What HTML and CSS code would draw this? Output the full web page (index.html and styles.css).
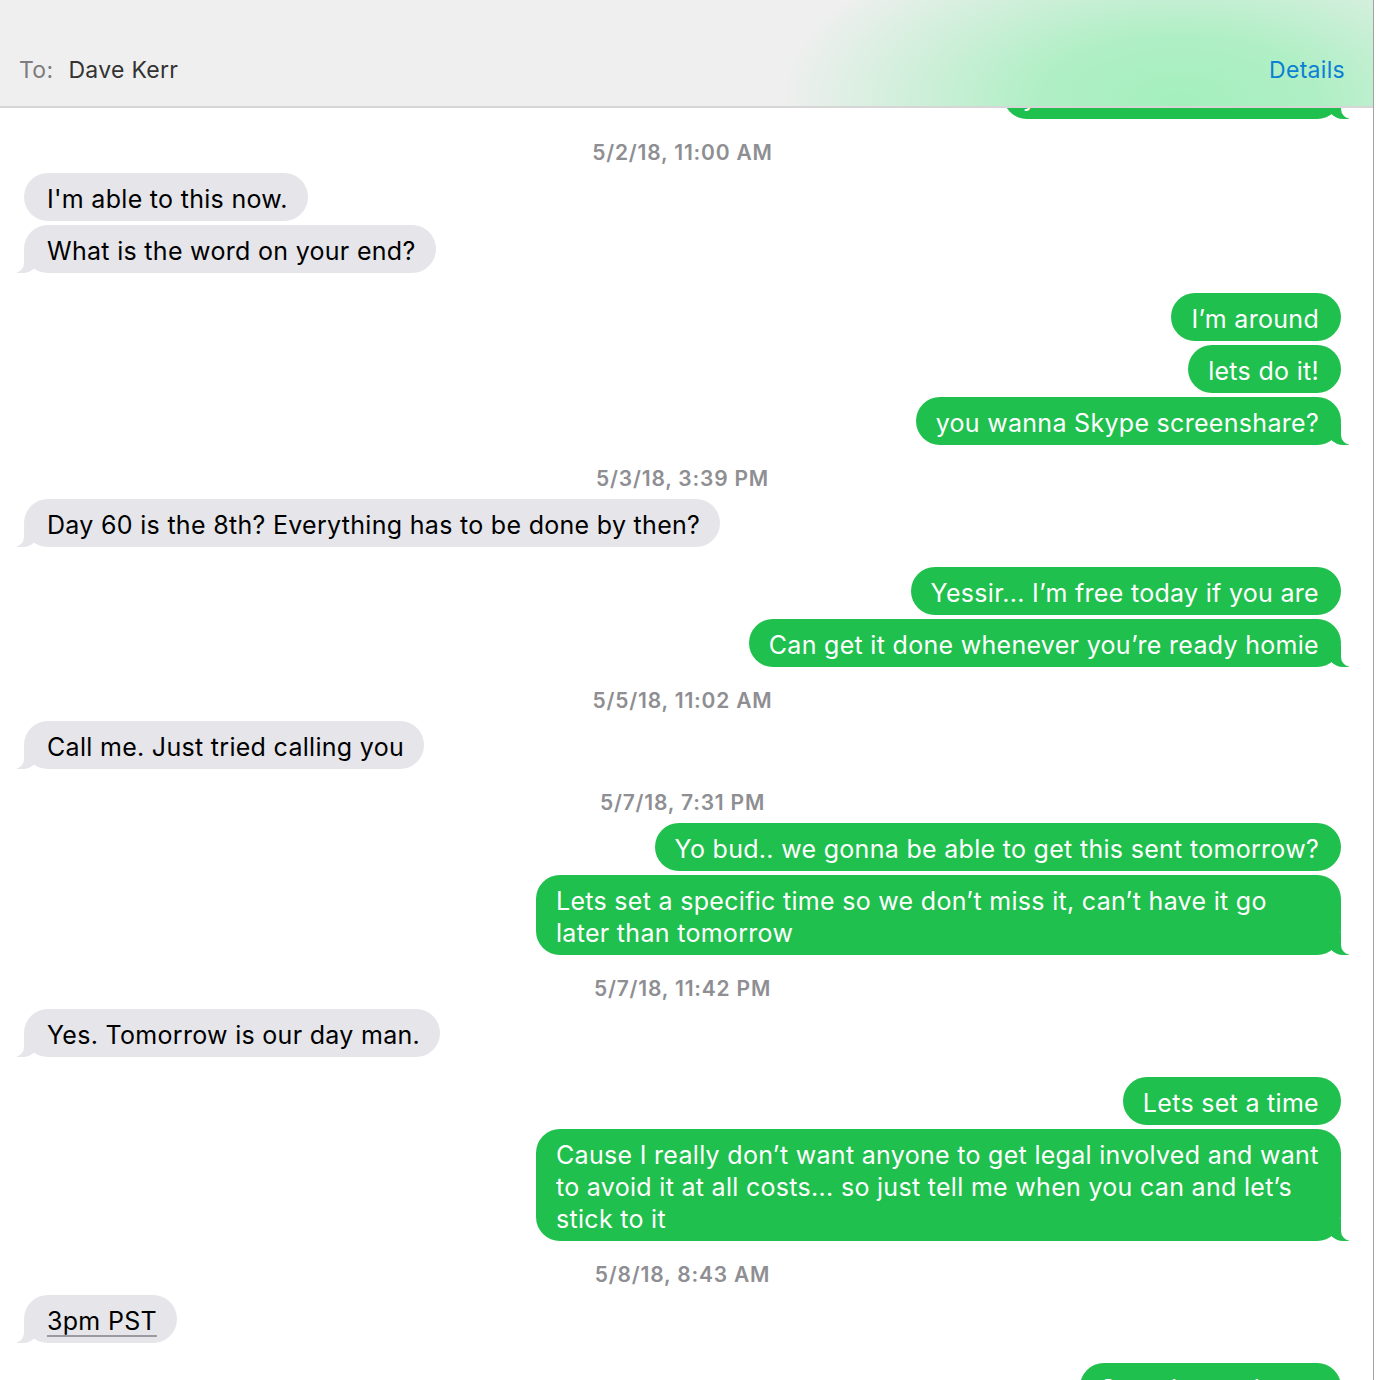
FILE: index.html
```html
<!DOCTYPE html>
<html lang="en">
<head>
    <meta charset="UTF-8">
    <meta name="viewport" content="width=device-width, initial-scale=1.0">
    <title>Messages - Dave Kerr</title>
    <link rel="stylesheet" href="styles.css">
</head>
<body>
    <div class="window">
        <div class="header">
            <span class="to-label">To:</span>
            <span class="to-name">Dave Kerr</span>
            <span class="details">Details</span>
        </div>

        <div class="thread">
            <div class="group me peek">
                <div class="bubble tail">you free later this week?</div>
            </div>

            <div class="stamp">5/2/18, 11:00 AM</div>
            <div class="group them">
                <div class="bubble">I'm able to this now.</div>
                <div class="bubble tail">What is the word on your end?</div>
            </div>
            <div class="group me">
                <div class="bubble">I’m around</div>
                <div class="bubble">lets do it!</div>
                <div class="bubble tail">you wanna Skype screenshare?</div>
            </div>

            <div class="stamp">5/3/18, 3:39 PM</div>
            <div class="group them">
                <div class="bubble tail">Day 60 is the 8th? Everything has to be done by then?</div>
            </div>
            <div class="group me">
                <div class="bubble">Yessir... I’m free today if you are</div>
                <div class="bubble tail">Can get it done whenever you’re ready homie</div>
            </div>

            <div class="stamp">5/5/18, 11:02 AM</div>
            <div class="group them">
                <div class="bubble tail">Call me. Just tried calling you</div>
            </div>

            <div class="stamp">5/7/18, 7:31 PM</div>
            <div class="group me">
                <div class="bubble">Yo bud.. we gonna be able to get this sent tomorrow?</div>
                <div class="bubble wide tail">Lets set a specific time so we don’t miss it, can’t have it go<br>later than tomorrow</div>
            </div>

            <div class="stamp">5/7/18, 11:42 PM</div>
            <div class="group them">
                <div class="bubble tail">Yes. Tomorrow is our day man.</div>
            </div>
            <div class="group me">
                <div class="bubble">Lets set a time</div>
                <div class="bubble wide tail">Cause I really don’t want anyone to get legal involved and want<br>to avoid it at all costs... so just tell me when you can and let’s<br>stick to it</div>
            </div>

            <div class="stamp">5/8/18, 8:43 AM</div>
            <div class="group them">
                <div class="bubble tail"><span class="detected">3pm PST</span></div>
            </div>
            <div class="group me">
                <div class="bubble tail">Sounds good man</div>
            </div>
        </div>
    </div>
</body>
</html>
```

FILE: styles.css
```css
html, body {
    margin: 0;
    padding: 0;
    overflow: hidden;
    background-color: #fff;
}
body {
    font-family: Inter, "Noto Sans", sans-serif;
}
.window {
    width: 1374px;
    height: 1380px;
    border-right: 1px solid #a3a3a3;
    box-sizing: border-box;
    overflow: hidden;
    background-color: #fff;
}
.header {
    position: relative;
    z-index: 5;
    height: 108px;
    box-sizing: border-box;
    display: flex;
    align-items: flex-end;
    padding: 0 28px 22px 19px;
    border-bottom: 2px solid #d6d6d6;
    background:
        radial-gradient(ellipse 400px 185px at 1180px 100px, #a4efbd 0%, #b0efc5 35%, rgba(239, 239, 239, 0) 100%),
        #efefef;
    font-size: 23px;
    line-height: 28px;
    letter-spacing: 0.3px;
}
.to-label {
    color: #7d7d7d;
    margin-right: 15px;
}
.to-name {
    color: #333;
}
.details {
    margin-left: auto;
    color: #0a7fd4;
}
.thread {
    display: flex;
    flex-direction: column;
    padding: 0 32px 0 24px;
    font-size: 25px;
    line-height: 32px;
    letter-spacing: 0.3px;
}
.group {
    display: flex;
    flex-direction: column;
    gap: 4px;
}
.group + .group {
    margin-top: 20px;
}
.group.them {
    align-items: flex-start;
}
.group.me {
    align-items: flex-end;
}
.group.peek {
    margin-top: -37px;
}
.stamp {
    margin: 22px 0 8px;
    text-align: center;
    font-size: 21px;
    line-height: 24px;
    font-weight: 600;
    letter-spacing: 0.8px;
    color: #8e8e93;
}
.bubble {
    position: relative;
    max-width: 805px;
    box-sizing: border-box;
    padding: 10px 22px 6px 20px;
    border-radius: 24px;
}
.them .bubble {
    background-color: #e5e5ea;
    color: #000;
    padding: 10px 20px 6px 23px;
}
.me .bubble {
    background-color: #1fc04d;
    color: #fff;
}
.bubble.wide {
    width: 805px;
}
.bubble.tail::before,
.bubble.tail::after {
    content: "";
    position: absolute;
    bottom: 0;
    height: 22px;
}
.them .bubble.tail::before {
    left: -7px;
    width: 22px;
    background-color: #e5e5ea;
    border-bottom-right-radius: 16px;
}
.them .bubble.tail::after {
    left: -12px;
    width: 12px;
    background-color: #fff;
    border-bottom-right-radius: 10px;
}
.me .bubble.tail::before {
    right: -8px;
    width: 22px;
    background-color: #1fc04d;
    border-bottom-left-radius: 16px;
}
.me .bubble.tail::after {
    right: -12px;
    width: 12px;
    background-color: #fff;
    border-bottom-left-radius: 10px;
}
.detected {
    text-decoration: underline;
    text-decoration-color: #9a9aa0;
    text-decoration-thickness: 2px;
    text-underline-offset: 5px;
}
```
